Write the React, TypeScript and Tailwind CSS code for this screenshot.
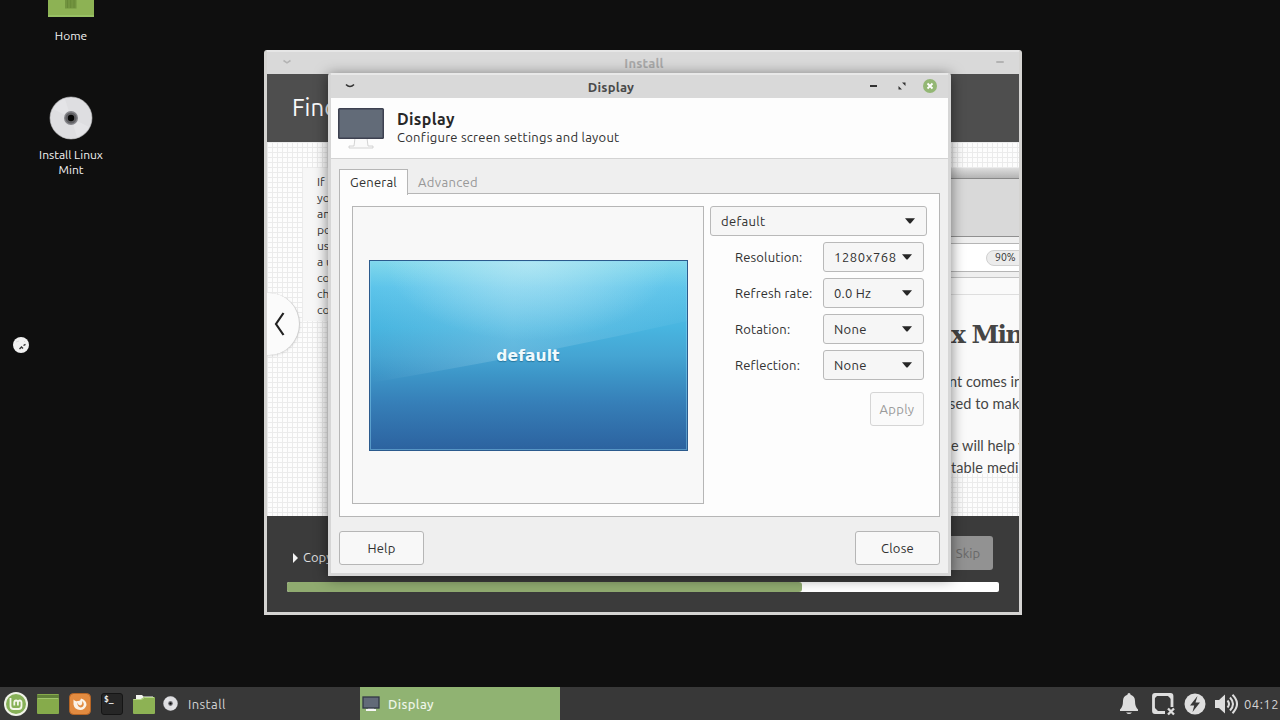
import type { ReactNode } from "react";
import clsx from "clsx";

const slideLines = ["If", "you", "and", "pos", "use", "a us", "con", "che", "con"];

const settings = [
  { label: "Resolution:", value: "1280x768", tracking: "tracking-[0.6px]" },
  { label: "Refresh rate:", value: "0.0 Hz", tracking: "tracking-[0.2px]" },
  { label: "Rotation:", value: "None", tracking: "tracking-[0.3px]" },
  { label: "Reflection:", value: "None", tracking: "tracking-[0.3px]" },
];

function Monitor({ className }: { className?: string }) {
  return (
    <svg viewBox="0 0 48 44" className={className}>
      <path d="M18 31h12l1 8h5v2H12v-2h5z" fill="#fafafa" stroke="#c9c9c9" strokeWidth="0.8" />
      <rect x="1" y="1" width="46" height="31" rx="1.5" fill="#3d4150" />
      <rect x="2.5" y="2.5" width="43" height="28" fill="#626b78" />
    </svg>
  );
}

function Disc({ className }: { className?: string }) {
  return (
    <svg viewBox="0 0 44 44" className={className}>
      <circle cx="22" cy="22" r="21" fill="#dedee1" stroke="#c4c4c6" strokeWidth="0.6" />
      <path d="M22 22 4 13a20 20 0 0 1 12-10zM22 22l18 9a20 20 0 0 1-12 10z" fill="#e4e4e7" />
      <circle cx="22" cy="22" r="7" fill="#85858a" />
      <circle cx="22" cy="22" r="5.6" fill="#606064" />
      <circle cx="22" cy="22" r="3.2" fill="#050505" />
    </svg>
  );
}

function Caret() {
  return (
    <svg viewBox="0 0 10 6" className="h-[6px] w-[10px] shrink-0">
      <path d="M0 .3h10L6 5q-1 1-2 0z" fill="#262626" />
    </svg>
  );
}

function Combo({ children, className }: { children: ReactNode; className?: string }) {
  return (
    <div
      className={clsx(
        "flex h-[30px] items-center justify-between rounded-[3px] border border-[#b9b9b9] bg-[#f6f6f6] pl-[10px] text-[#303030]",
        className,
      )}
    >
      <span className="pt-[2px]">{children}</span>
      <Caret />
    </div>
  );
}

function DesktopIcons() {
  return (
    <>
      <div className="absolute top-[-20px] left-[31px] flex w-[80px] flex-col items-center text-[12px] text-[#f2f2f2]">
        <svg viewBox="0 0 46 37" className="h-[37px] w-[46px]">
          <rect width="46" height="37" fill="#8db254" />
          <path d="M0 36h46" stroke="#9dc46a" strokeWidth="1.5" />
          <rect x="17" y="17" width="11.5" height="11.5" fill="#72943f" />
          <path d="M19.5 18v10M22.7 18v10M26 18v10" stroke="#668735" strokeWidth="0.8" />
        </svg>
        <span className="mt-[11px] leading-[15px]">Home</span>
      </div>
      <div className="absolute top-[96px] left-[21px] flex w-[100px] flex-col items-center text-center text-[12px] leading-[15px] text-[#f2f2f2]">
        <Disc className="h-[44px] w-[44px]" />
        <span className="mt-[7px]">
          Install Linux
          <br />
          Mint
        </span>
      </div>
      <svg viewBox="0 0 18 18" className="absolute top-[336px] left-[12px] h-[18px] w-[18px]">
        <circle cx="9" cy="9" r="8" fill="#f1f1f1" />
        <path d="M7.5 13l2-2 1.5 1.5M11.5 9.5l2-1.2" stroke="#333" strokeWidth="1.4" fill="none" />
        <path d="M4 6l3-1M12 5l1 1" stroke="#ddd" />
      </svg>
    </>
  );
}

function InstallWindow() {
  return (
    <div className="absolute top-[50px] left-[264px] flex h-[565px] w-[758px] flex-col rounded-t-[3px] border-x-[3px] border-b-[3px] border-[#d5d4d2] bg-[#d9d9d9]">
      <div className="flex h-[24px] shrink-0 items-center justify-between border-t-[2px] border-[#e6e6e6] px-[15px] text-[13px] font-bold text-[#a9a9a9]">
        <svg viewBox="0 0 10 6" className="mb-[3px] h-[6px] w-[10px]">
          <path d="M1.5 1.5 5 3.800l3.500-2.300" stroke="#b3b3b3" strokeWidth="1.5" fill="none" />
        </svg>
        <span className="pt-[2px] tracking-[0.2px]">Install</span>
        <span className="mb-[2px] h-[2px] w-[8px] rounded bg-[#b3b3b3]" />
      </div>
      <div className="flex h-[68px] shrink-0 items-center bg-[#4e4e4e] pl-[25px] text-[24px] text-[#fafafa]">
        Find
      </div>
      <div className="flex h-[374px] shrink-0 justify-between overflow-hidden bg-[#fdfdfd] bg-[linear-gradient(#ebebeb_1px,transparent_1px),linear-gradient(90deg,#ebebeb_1px,transparent_1px)] bg-[size:5px_5px] pt-[26px]">
        <div className="relative w-[100px] pl-[36px]">
          <div className="h-[153px] bg-[#f7f7f7] pt-[6px] pl-[14px] text-[12px] leading-[16px] text-[#363636]">
            {slideLines.map((line, i) => (
              <div key={i} className="whitespace-nowrap">{line}</div>
            ))}
          </div>
          <div className="absolute top-[125px] left-0 flex h-[62px] w-[33px] items-center rounded-r-full border-r border-[#cfcfcf] bg-[#fbfbfb] pl-[7px] shadow-sm">
            <svg viewBox="0 0 12 26" className="h-[26px] w-[12px]">
              <path d="M9.5 2 2 13l7.500 11" stroke="#222" strokeWidth="2.200" fill="none" />
            </svg>
          </div>
        </div>
        <div className="flex w-[69px] flex-col overflow-hidden whitespace-nowrap text-[#454545]">
          <div className="h-[11px] shrink-0 border-b border-[#888] bg-linear-to-b from-[#dedede] to-[#b4b4b4]" />
          <div className="h-[58px] shrink-0 border-b border-[#909090] bg-[#d9d9d9]" />
          <div className="h-[6px] shrink-0 bg-[#efefef]" />
          <div className="flex h-[29px] shrink-0 items-center border-y border-[#b5b5b5] bg-white pl-[36px]">
            <span className="h-[16px] w-[45px] shrink-0 rounded-full border border-[#d0d0d0] bg-[#ececec] pl-[8px] text-[10.500px] leading-[13px] text-[#333]">
              90%
            </span>
          </div>
          <div className="h-[6px] shrink-0 border-b border-[#c3c3c3] bg-[#efefef]" />
          <div className="h-[17px] shrink-0 border-b border-[#dedede] bg-[#fafafa]" />
          <div className="h-[179px] shrink-0 bg-[#fafafa] pl-[1px]">
            <div className="pt-[23px] font-['DejaVu_Serif',serif] text-[25px] leading-[34px] font-bold tracking-[-1.600px]">
              x Min
            </div>
            <div className="pt-[19px] font-[Lato,sans-serif] text-[14.500px] leading-[21.500px]">
              <div className="-ml-[2px]">nt comes in</div>
              <div className="-ml-[2px] tracking-[0.100px]">sed to mak</div>
              <div className="mt-[21px]">e will help y</div>
              <div className="tracking-[0.100px]">table medi</div>
            </div>
          </div>
        </div>
      </div>
      <div className="flex flex-1 flex-col bg-[#3b3b3b] px-[20px] pt-[20px] text-[13px]">
        <div className="flex h-[34px] items-center justify-between pr-[6px] text-[#dedede]">
          <div className="flex items-center gap-[5px] pt-[10px] pl-[6px]">
            <svg viewBox="0 0 5 10" className="h-[10px] w-[5px]">
              <path d="M0 0l5 5-5 5z" fill="#f4f4f4" />
            </svg>
            Copy
          </div>
          <div className="flex h-[34px] w-[80px] items-center justify-end rounded-[3px] bg-[#929292] pt-[2px] pr-[13px] text-[#686868]">
            Skip
          </div>
        </div>
        <div className="mt-[12px] h-[10px] shrink-0 overflow-hidden rounded-[2px] bg-white">
          <div className="h-full w-[515px] rounded-r-[3px] bg-[#90ab70]" />
        </div>
      </div>
    </div>
  );
}

function ScreenPreview() {
  return (
    <div className="flex h-[298px] w-[352px] items-center justify-center border border-[#b6b6b6] bg-[#f8f8f8]">
      <div className="relative h-[191px] w-[319px] border border-[#2b5a8d] bg-[radial-gradient(ellipse_45%_42%_at_50%_0%,rgba(200,240,246,.6),transparent),linear-gradient(#80d8ec_0%,#5cc4ea_14%,#48b5e0_35%,#45a5d3_50%,#3d96c8_60%,#367fb8_75%,#2c629f_100%)] shadow-[inset_0_0_0_1px_rgba(140,215,245,.45)]">
        <svg viewBox="0 0 317 189" preserveAspectRatio="none" className="absolute inset-0 h-full w-full">
          <defs>
            <linearGradient id="gloss" x1="0" y1="0" x2="1" y2="0">
              <stop offset="0" stopColor="#bfe6f5" stopOpacity="0" />
              <stop offset="0.45" stopColor="#bfe6f5" stopOpacity="0.24" />
              <stop offset="1" stopColor="#bfe6f5" stopOpacity="0.04" />
            </linearGradient>
          </defs>
          <path d="M0 0h317v60Q250 75 180 89T0 122z" fill="url(#gloss)" />
        </svg>
        <div className="relative flex h-full items-center justify-center pt-[3px] font-['DejaVu_Sans',sans-serif] text-[15.500px] font-bold tracking-[0.1px] text-[#f0fafd] [text-shadow:0_1px_1px_#28779f]">
          default
        </div>
      </div>
    </div>
  );
}

function DisplayDialog() {
  return (
    <div className="absolute top-[73px] left-[328px] flex h-[503px] w-[623px] flex-col rounded-t-[3px] border-x-[3px] border-b-[3px] border-[#d6d6d6] bg-[#efefef] text-[13px] text-[#303030] shadow-[0_2px_14px_rgba(0,0,0,.5)]">
      <div className="flex h-[25px] shrink-0 items-center border-t-[2px] border-[#e8e8e8] bg-[#d9d9d9]">
        <svg viewBox="0 0 10 6" className="mb-[2px] ml-[14px] h-[6px] w-[10px]">
          <path d="M1 1.500q4 4 8 0" stroke="#333" strokeWidth="1.600" fill="none" />
        </svg>
        <div className="w-[512px] pt-[3px] text-center font-bold tracking-[0.200px] text-[#4a4a4a]">
          Display
        </div>
        <div className="mb-[1px] ml-[3px] flex items-center">
          <span className="h-[2px] w-[7px] bg-[#333]" />
          <svg viewBox="0 0 10 10" className="ml-[20px] h-[10px] w-[10px]">
            <path d="M5 1.500h3.500V5zM1.500 5v3.500H5z" fill="#333" />
          </svg>
          <svg viewBox="0 0 14 14" className="ml-[16px] h-[14px] w-[14px]">
            <circle cx="7" cy="7" r="7" fill="#93b774" />
            <path d="M4.500 4.500l5 5M9.500 4.500l-5 5" stroke="#fff" strokeWidth="1.800" />
          </svg>
        </div>
      </div>
      <div className="flex h-[61px] shrink-0 border-b border-[#d3d3d3] bg-[#fdfdfd] pt-[9px] pl-[6px]">
        <Monitor className="h-[44px] w-[48px]" />
        <div className="pl-[12px]">
          <div className="pt-[1px] text-[16px] leading-[22px] font-bold tracking-[0.350px] text-[#282828]">
            Display
          </div>
          <div className="-mt-[2px] leading-[18px] tracking-[0.240px]">
            Configure screen settings and layout
          </div>
        </div>
      </div>
      <div className="flex flex-1 flex-col px-[8px] pt-[10px] pb-[8px]">
        <div className="flex h-[25px] shrink-0">
          <div className="relative z-10 -mb-px w-[69px] border border-b-0 border-[#b6b6b6] bg-[#fdfdfd] text-center leading-[24px] tracking-[0.200px]">
            General
          </div>
          <div className="pt-[1px] pl-[10px] leading-[24px] tracking-[0.350px] text-[#989898]">Advanced</div>
        </div>
        <div className="-mt-px flex h-[324px] shrink-0 gap-[6px] border border-[#b6b6b6] bg-[#fdfdfd] pt-[12px] pl-[12px]">
          <ScreenPreview />
          <div className="flex w-[217px] flex-col">
            <Combo className="pr-[11px] tracking-[0.300px]">default</Combo>
            <div className="mt-[6px] flex flex-col gap-[6px] pr-[3px] pl-[25px]">
              {settings.map((row) => (
                <div key={row.label} className="flex items-center justify-between">
                  <span className="pt-[2px] tracking-[0.150px] whitespace-nowrap">{row.label}</span>
                  <Combo className="w-[101px] pr-[11px]">
                    <span className={row.tracking}>{row.value}</span>
                  </Combo>
                </div>
              ))}
            </div>
            <div className="mt-[12px] mr-[3px] flex h-[34px] w-[54px] items-center justify-center self-end rounded-[3px] border border-[#d5d5d5] bg-[#fafafa] pt-[2px] tracking-[0.300px] text-[#9b9b9b]">
              Apply
            </div>
          </div>
        </div>
        <div className="mt-[14px] flex justify-between">
          {["Help", "Close"].map((label) => (
            <div
              key={label}
              className="flex h-[34px] w-[85px] items-center justify-center rounded-[3px] border border-[#b6b6b6] bg-[#f8f8f8] pt-[2px] tracking-[0.200px]"
            >
              {label}
            </div>
          ))}
        </div>
      </div>
    </div>
  );
}

function Taskbar() {
  return (
    <div className="flex h-[33px] shrink-0 items-center bg-[#383838] text-[13px] text-[#d5d5d5]">
      <div className="flex w-[360px] items-center pl-[4px]">
        <svg viewBox="0 0 24 24" className="h-[24px] w-[24px]">
          <circle cx="12" cy="12" r="12" fill="#f0f3e8" />
          <circle cx="12" cy="12" r="10" fill="#87b158" />
          <path
            d="M6.500 6v8q0 3 3 3h5q3 0 3-3v-3.500q0-2-1.700-2t-1.900 2v3M13.900 10.500q0-2-1.800-2t-1.800 2v3"
            stroke="#f4f7ec"
            strokeWidth="1.800"
            fill="none"
          />
        </svg>
        <svg viewBox="0 0 22 20" className="ml-[9px] h-[20px] w-[22px]">
          <rect width="22" height="20" rx="1" fill="#86ab4b" />
          <path d="M0 1h22v3H0z" fill="#62813a" />
          <path d="M1 4.500h20" stroke="#a2c66d" />
        </svg>
        <svg viewBox="0 0 22 22" className="ml-[10px] h-[22px] w-[22px]">
          <rect x="0.500" y="0.500" width="21" height="21" rx="4" fill="#e28b40" stroke="#b76524" />
          <path d="M4.500 6.500q2 2.500 4 1.500 3 .5 3.500-2.500Q17.500 7 17.500 12q-1.500 5-6.300 5-5.700-.3-6.700-5.500z" fill="#fbf3e8" />
          <path d="M8 9.500q2 4 4.500 2.500 1.500-1.500.5-4 3 2.500 1 5.500-4.500 3-6-4z" fill="#e28b40" />
        </svg>
        <div className="ml-[10px] h-[22px] w-[22px] rounded-[3px] border border-[#151515] bg-[#262626] pt-[2px] pl-[2px] font-['DejaVu_Sans_Mono',monospace] text-[8px] leading-[8px] font-bold text-[#eee]">
          $_
        </div>
        <svg viewBox="0 0 22 20" className="ml-[10px] h-[20px] w-[22px]">
          <path d="M3 3V1h6l1.500 1.500H20V7H3z" fill="#f4f6ef" />
          <path d="M0 5h8l3-2h10q1 0 1 1v15q0 1-1 1H1q-1 0-1-1z" fill="#8db254" />
          <path d="M.500 5.500h8l3-2H21" stroke="#bada8c" fill="none" />
        </svg>
        <Disc className="ml-[8px] h-[15px] w-[15px]" />
        <span className="ml-[10px] pt-[2px] tracking-[0.400px]">Install</span>
      </div>
      <div className="flex h-full w-[200px] items-center bg-[#90b372] pl-[2px] text-[#edf5e7]">
        <svg viewBox="0 0 18 16" className="h-[16px] w-[18px]">
          <path d="M6 11h6v2h2v2H4v-2h2z" fill="#f7f7f7" />
          <rect x="1" y="1" width="16" height="11" fill="#626a78" stroke="#323846" strokeWidth="1.300" />
        </svg>
        <span className="ml-[8px] pt-[2px] font-medium tracking-[0.400px]">Display</span>
      </div>
      <div className="ml-auto flex items-center pr-[1px]">
        <svg viewBox="0 0 20 22" className="h-[22px] w-[20px]" fill="#dedede">
          <path d="M10 0q1.500 0 1.600 1.700Q16 3 16 8q0 6 3 8.500V18H1v-1.500Q4 14 4 8q0-5 4.400-6.300Q8.500 0 10 0zM7 19.500h6q-3 3-6 0z" />
        </svg>
        <svg viewBox="0 0 24 24" className="ml-[12px] h-[24px] w-[24px]">
          <path
            d="M14 20.500H4q-1.500 0-1.500-1.500V4Q2.500 2.500 4 2.500h15.500Q21 2.500 21 4v11"
            stroke="#dedede"
            strokeWidth="2.800"
            fill="none"
          />
          <path d="M3 15l5 5H3zM21 8l-5-5h5zM3 7l4-4H3z" fill="#dedede" />
          <path d="M17 16.500l6 6M23 16.500l-6 6" stroke="#dedede" strokeWidth="2.300" />
        </svg>
        <svg viewBox="0 0 22 22" className="ml-[9px] h-[22px] w-[22px]">
          <circle cx="11" cy="11" r="10.500" fill="#dedede" />
          <path d="M13.500 3 6 12.500h4.200L8.500 19 16 9.500h-4.500z" fill="#383838" />
        </svg>
        <svg viewBox="0 0 24 22" className="ml-[8px] h-[22px] w-[24px]">
          <path d="M1 7h4l6-5.500v19L5 15H1z" fill="#dedede" />
          <path
            d="M13.500 7.500q3 3.500 0 7M16 4.500q6 6.500 0 13M18.500 1.800q9 9.200 0 18.400"
            stroke="#dedede"
            strokeWidth="2"
            fill="none"
          />
        </svg>
        <span className="ml-[6px] pt-[2px] tracking-[0.500px]">04:12</span>
      </div>
    </div>
  );
}

export default function App() {
  return (
    <div className="flex h-[720px] w-[1280px] flex-col overflow-hidden bg-[#0f0f0f] font-[Ubuntu,'Noto_Sans',sans-serif]">
      <div className="relative flex-1">
        <DesktopIcons />
        <InstallWindow />
        <DisplayDialog />
      </div>
      <Taskbar />
    </div>
  );
}
